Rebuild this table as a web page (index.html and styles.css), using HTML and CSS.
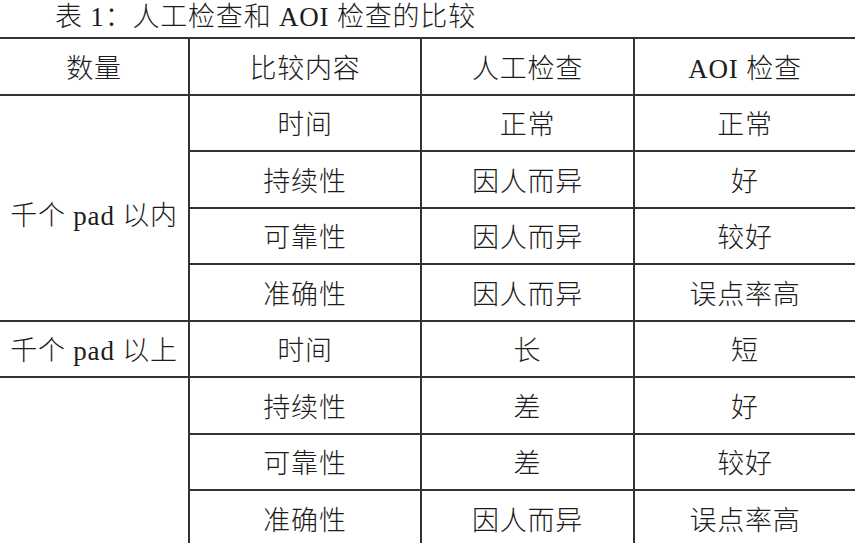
FILE: index.html
```html
<!DOCTYPE html>
<html lang="zh-CN">
<head>
<meta charset="utf-8">
<link rel="stylesheet" href="styles.css">
</head>
<body>
<div class="page">
  <div class="caption">表 1：人工检查和 AOI 检查的比较</div>
  <table class="cmp">
    <colgroup>
      <col class="c1"><col class="c2"><col class="c3"><col class="c4">
    </colgroup>
    <tr class="row"><td>数量</td><td>比较内容</td><td>人工检查</td><td>AOI 检查</td></tr>
    <tr class="row"><td rowspan="4" class="group">千个 pad 以内</td><td>时间</td><td>正常</td><td>正常</td></tr>
    <tr class="row"><td>持续性</td><td>因人而异</td><td>好</td></tr>
    <tr class="row"><td>可靠性</td><td>因人而异</td><td>较好</td></tr>
    <tr class="row"><td>准确性</td><td>因人而异</td><td>误点率高</td></tr>
    <tr class="row"><td>千个 pad 以上</td><td>时间</td><td>长</td><td>短</td></tr>
    <tr class="row"><td rowspan="3"></td><td>持续性</td><td>差</td><td>好</td></tr>
    <tr class="row"><td>可靠性</td><td>差</td><td>较好</td></tr>
    <tr class="row"><td>准确性</td><td>因人而异</td><td>误点率高</td></tr>
  </table>
</div>
</body>
</html>
```

FILE: styles.css
```css
html, body {
  margin: 0;
  padding: 0;
  background: #ffffff;
}
body {
  width: 855px;
  height: 543px;
  overflow: hidden;
  font-family: "Liberation Serif", "Noto Sans CJK SC", serif;
  font-weight: 300;
  color: #1c1c1c;
}
.page {
  width: 855px;
}
.caption {
  height: 37px;
  padding-left: 55px;
  font-size: 27px;
  letter-spacing: 0.8px;
  line-height: 35px;
  white-space: nowrap;
}
.cmp {
  width: 855px;
  border-collapse: collapse;
  table-layout: fixed;
  font-size: 27px;
  letter-spacing: 0.8px;
}
.cmp .c1 { width: 189px; }
.cmp .c2 { width: 232px; }
.cmp .c3 { width: 213px; }
.cmp .c4 { width: 221px; }
.cmp td {
  border: 2px solid #333333;
  text-align: center;
  vertical-align: middle;
  padding: 0;
  white-space: nowrap;
}
.cmp tr td:first-child { border-left: none; }
.cmp tr td:last-child { border-right: none; }
.cmp .row { height: 56.5px; }
.cmp td.group { padding-top: 12px; }
```
